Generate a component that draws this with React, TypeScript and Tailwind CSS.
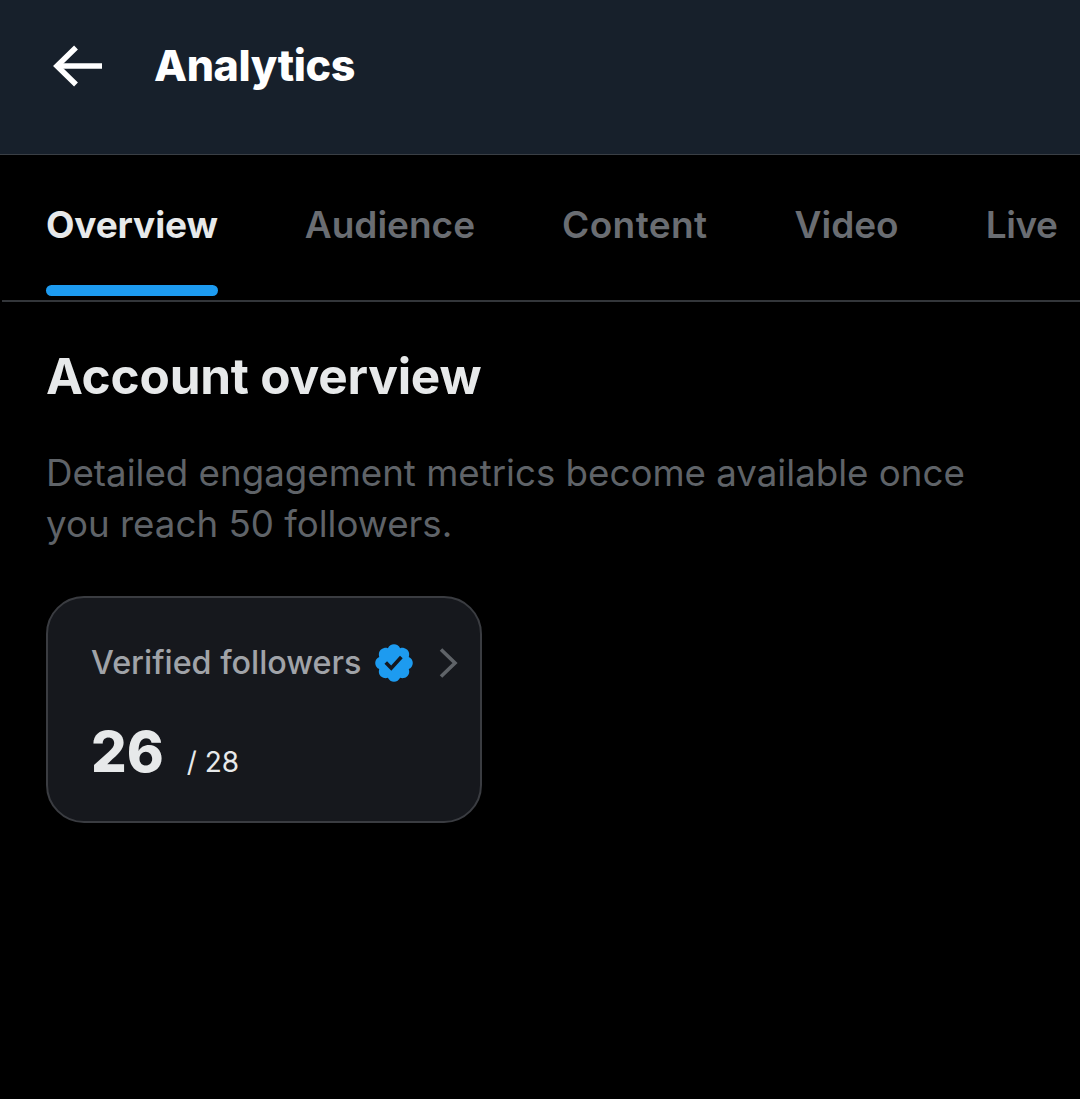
const tabs = [
  { label: "Overview", active: true, tracking: "tracking-[-0.15px]" },
  { label: "Audience", tracking: "" },
  { label: "Content", tracking: "tracking-[0.4px]" },
  { label: "Video", tracking: "" },
  { label: "Live", tracking: "tracking-[-0.4px]" },
];

const BackArrow = () => (
  <svg width="50" height="42" viewBox="0 0 50 42" fill="none" stroke="#ffffff" strokeWidth="5.5" className="shrink-0">
    <path d="M4 21H49" />
    <path d="M23 2.5L4 21L23 39.5" />
  </svg>
);

const VerifiedBadge = () => (
  <svg width="44" height="44" viewBox="0 0 22 22" className="shrink-0">
    <path
      fill="#1d9bf0"
      d="M20.396 11c-.018-.646-.215-1.275-.57-1.816-.354-.54-.852-.972-1.438-1.246.223-.607.27-1.264.14-1.897-.131-.634-.437-1.218-.882-1.687-.47-.445-1.053-.75-1.687-.882-.633-.13-1.29-.083-1.897.14-.273-.587-.704-1.086-1.245-1.44S11.647 1.62 11 1.604c-.646.017-1.273.213-1.813.568s-.969.854-1.24 1.44c-.608-.223-1.267-.272-1.902-.14-.635.13-1.22.436-1.69.882-.445.47-.749 1.055-.878 1.688-.13.633-.08 1.29.144 1.896-.587.274-1.087.705-1.443 1.245-.356.54-.555 1.17-.574 1.817.02.647.218 1.276.574 1.817.356.54.856.972 1.443 1.245-.224.606-.274 1.263-.144 1.896.13.634.433 1.218.877 1.688.47.443 1.054.747 1.687.878.633.132 1.29.084 1.897-.136.274.586.705 1.084 1.246 1.439.54.354 1.17.551 1.816.569.647-.016 1.276-.213 1.817-.567s.972-.854 1.245-1.44c.604.239 1.266.296 1.903.164.636-.132 1.22-.447 1.68-.907.46-.46.776-1.044.908-1.681s.075-1.299-.165-1.903c.586-.274 1.084-.705 1.439-1.246.354-.54.551-1.17.569-1.816z"
    />
    <path
      fill="#15181f"
      d="M9.662 14.85l-3.429-3.428 1.293-1.302 2.072 2.072 4.4-4.794 1.347 1.246z"
    />
  </svg>
);

const Chevron = () => (
  <svg width="20" height="32" viewBox="0 0 20 32" fill="none" stroke="#5f6368" strokeWidth="3.6" className="shrink-0">
    <path d="M3 2.5L17 16L3 29.5" />
  </svg>
);

export default function App() {
  return (
    <div className="w-[1080px] h-[1099px] bg-black overflow-hidden font-['Inter',sans-serif]">
      {/* Top bar */}
      <header className="h-[155px] bg-[#17202b] border-b border-[#3a3f45] flex items-start pt-[45px] pl-[53px]">
        <BackArrow />
        <h1 className="ml-[51px] text-[43px] leading-[40px] font-extrabold text-white tracking-[-0.4px]">Analytics</h1>
      </header>

      {/* Tabs */}
      <nav className="h-[147px] ml-[2px] border-b-2 border-[#33363a] flex pl-[44px] gap-[87px] whitespace-nowrap">
        {tabs.map((tab) => (
          <div key={tab.label} className="flex flex-col justify-between">
            <span
              className={`mt-[49px] text-[37px] leading-[42px] ${tab.tracking} ${
                tab.active ? "font-bold text-[#e7e9ea]" : "font-semibold text-[#6a6d72]"
              }`}
            >
              {tab.label}
            </span>
            {tab.active && <div className="h-[11px] mb-[4px] rounded-full bg-[#1d9bf0]" />}
          </div>
        ))}
      </nav>

      {/* Overview */}
      <main className="pl-[46px]">
        <h2 className="mt-[46px] text-[49.5px] leading-[56px] font-bold text-[#e7e9ea] tracking-[-0.2px]">Account overview</h2>
        <p className="mt-[43px] text-[36.7px] leading-[51px] text-[#5f6368] w-[1000px]">
          Detailed engagement metrics become available once
          <br />
          you reach 50 followers.
        </p>

        <div className="mt-[47px] w-[436px] h-[227px] rounded-[38px] border-2 border-[#3a3c41] bg-[#16181d] pl-[43px] pr-[21px] pt-[45px]">
          <div className="flex items-center h-[40px]">
            <span className="text-[32.3px] leading-[40px] font-medium text-[#a0a3a8] whitespace-nowrap">Verified followers</span>
            <span className="ml-[11px] -my-[2px]">
              <VerifiedBadge />
            </span>
            <span className="ml-[22px]">
              <Chevron />
            </span>
          </div>
          <div className="mt-[34px] flex items-baseline">
            <span className="text-[56px] leading-[70px] font-extrabold text-[#e7e9ea]">26</span>
            <span className="ml-[23px] text-[28px] leading-[34px] text-[#e7e9ea]">/ 28</span>
          </div>
        </div>
      </main>
    </div>
  );
}
